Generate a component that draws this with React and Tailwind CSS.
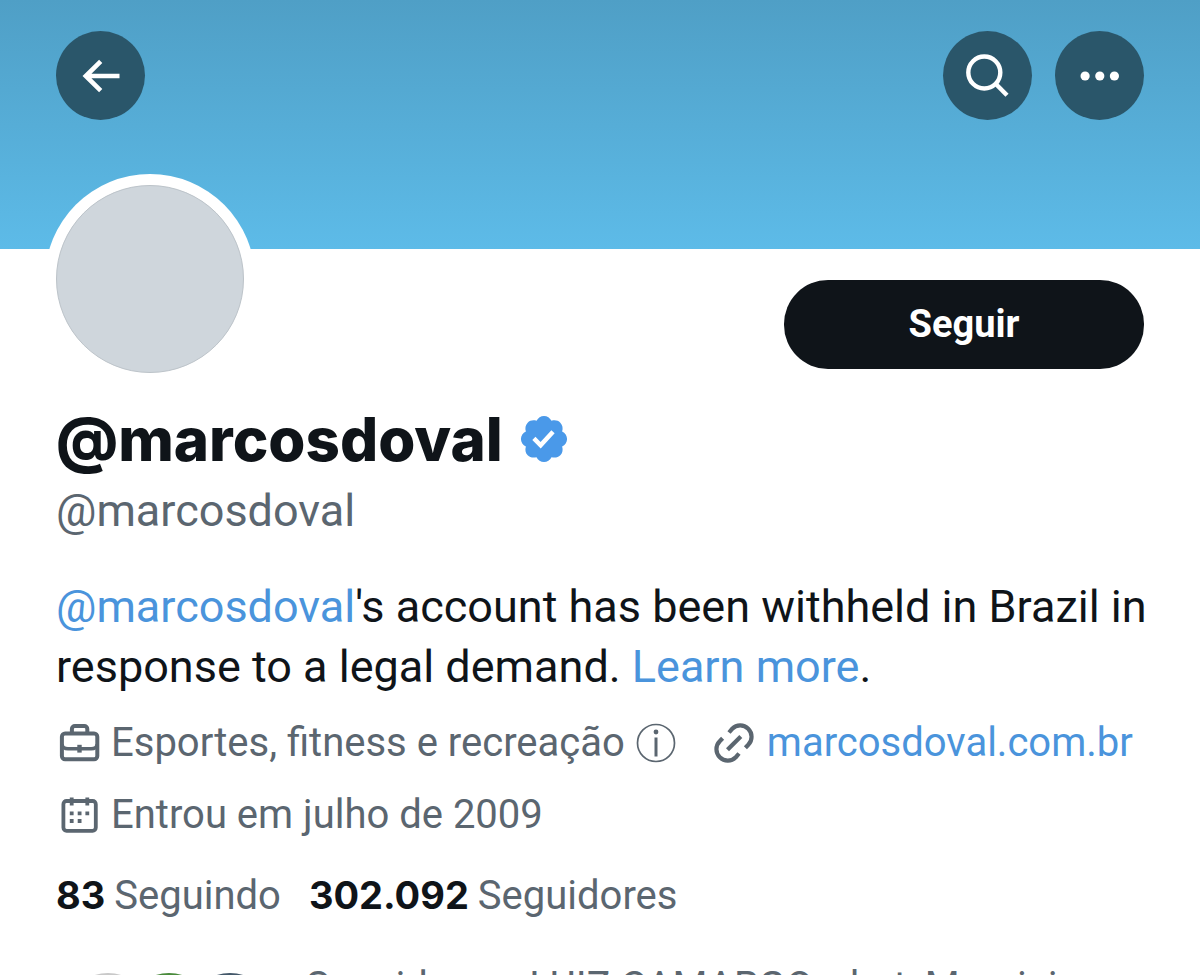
import React from "react";

function RoundButton({ label, children }) {
  return (
    <button
      type="button"
      aria-label={label}
      className="flex size-[89px] items-center justify-center rounded-full bg-[#2a566a] text-white"
    >
      {children}
    </button>
  );
}

function ArrowIcon() {
  return (
    <svg viewBox="0 0 44 44" className="size-11" fill="none" stroke="currentColor" strokeWidth="4.6" aria-hidden="true">
      <path d="M40.5 22H6.500M21.700 7.400 6.800 22l14.900 14.600" />
    </svg>
  );
}

function SearchIcon() {
  return (
    <svg viewBox="0 0 44 44" className="size-11" fill="none" stroke="currentColor" strokeWidth="4.4" aria-hidden="true">
      <circle cx="18.3" cy="18.5" r="16" />
      <path d="M29.6 29.8 41 41.2" />
    </svg>
  );
}

function MoreIcon() {
  return (
    <svg viewBox="0 0 44 44" className="size-11" fill="currentColor" aria-hidden="true">
      <circle cx="7.1" cy="22" r="4.6" />
      <circle cx="21.8" cy="22" r="4.6" />
      <circle cx="36.4" cy="22" r="4.6" />
    </svg>
  );
}

function VerifiedIcon() {
  return (
    <svg viewBox="0 0 24 24" className="size-[54px] text-[#4a99e9]" fill="currentColor" role="img" aria-label="Conta verificada">
      <path d="M22.25 12c0-1.43-.88-2.67-2.19-3.34.46-1.39.2-2.9-.81-3.91s-2.52-1.27-3.91-.81c-.66-1.31-1.91-2.19-3.34-2.19s-2.67.88-3.33 2.19c-1.4-.46-2.91-.2-3.92.81s-1.26 2.52-.8 3.91c-1.31.67-2.2 1.91-2.2 3.34s.89 2.67 2.2 3.34c-.46 1.39-.21 2.9.8 3.91s2.52 1.26 3.91.81c.67 1.31 1.91 2.19 3.34 2.19s2.68-.88 3.34-2.19c1.39.45 2.9.2 3.91-.81s1.27-2.52.81-3.91c1.31-.67 2.19-1.91 2.19-3.34zm-11.71 4.2L6.8 12.46l1.41-1.42 2.26 2.26 4.8-5.23 1.47 1.36-6.2 6.77z" />
    </svg>
  );
}

function BriefcaseIcon() {
  return (
    <svg viewBox="0 0 44 44" className="size-11 shrink-0" fill="none" stroke="currentColor" strokeWidth="4" aria-hidden="true">
      <rect x="5.9" y="12.6" width="35.4" height="25.6" rx="3.2" />
      <path d="M15.9 12.6V8a3 3 0 0 1 3-3h9.400a3 3 0 0 1 3 3v4.600" />
      <path d="M6 23c0 3 2.600 4.700 6 4.700h23.200c3.400 0 6-1.700 6-4.700" strokeWidth="3.500" />
      <path d="M23.500 23.800v7.800" strokeWidth="4.400" />
    </svg>
  );
}

function CalendarIcon() {
  return (
    <svg viewBox="0 0 44 44" className="size-11 shrink-0" fill="none" stroke="currentColor" strokeWidth="3.8" aria-hidden="true">
      <rect x="7.4" y="8" width="32.4" height="29.8" rx="3.2" />
      <path d="M15.700 4.400v8M31.300 4.400v8" />
      <path d="M13.800 20.300h3.800M21.700 20.300h3.800M29.400 20.300h3.800M13.800 28h3.800M21.700 28h3.800" />
    </svg>
  );
}

function InfoIcon() {
  return (
    <svg viewBox="0 0 40 40" className="size-10 shrink-0" fill="none" stroke="currentColor" aria-hidden="true">
      <circle cx="20" cy="20" r="18.5" strokeWidth="1.7" />
      <circle cx="20" cy="9" r="2.4" fill="currentColor" stroke="none" />
      <path d="M20 14.500v19" strokeWidth="3" />
    </svg>
  );
}

function LinkIcon() {
  return (
    <svg viewBox="0 0 44 44" className="size-11 shrink-0" fill="none" stroke="currentColor" strokeWidth="4.2" aria-hidden="true">
      <path d="M17 11.500 20.200 7.800A11.300 11.300 0 0 1 36.300 23.700L33.400 26.800" />
      <path d="M27 32.500 23.800 36.200A11.300 11.300 0 0 1 7.700 20.300L10.600 17.200" />
      <path d="M15.500 28.700 28.800 15.400" />
    </svg>
  );
}

export default function App() {
  return (
    <main className="h-screen overflow-hidden bg-white font-[Roboto,sans-serif] text-[#0f1419]">
      <header className="flex h-[249px] items-start justify-between bg-linear-to-b from-[#4f9fc6] to-[#5dbbe8] px-14 pt-[31px]">
        <RoundButton label="Voltar">
          <ArrowIcon />
        </RoundButton>
        <div className="flex gap-[23px]">
          <RoundButton label="Buscar">
            <SearchIcon />
          </RoundButton>
          <RoundButton label="Mais">
            <MoreIcon />
          </RoundButton>
        </div>
      </header>

      <section className="px-14">
        <div className="flex items-end justify-between">
          <div className="-mt-16 size-[188px] rounded-full border border-[#bcc3c9] bg-[#cfd6dc] ring-[11px] ring-white" />
          <button
            type="button"
            className="mb-1 h-[89px] w-[360px] rounded-[44px] bg-[#0f1419] text-[38px] font-bold text-white"
          >
            Seguir
          </button>
        </div>

        <div className="mt-[30px] flex items-center gap-[14px]">
          <h1 className="font-[Inter,sans-serif] text-[60px] leading-[72px] font-extrabold">@marcosdoval</h1>
          <VerifiedIcon />
        </div>
        <p className="mt-[6px] text-[45px] leading-[60px] text-[#5b6670]">@marcosdoval</p>

        <p className="-mr-4 mt-9 text-[45px] leading-[60px]">
          <a href="#perfil" className="text-[#4a94dc]">@marcosdoval</a>'s account has been withheld in Brazil in
          response to a legal demand. <a href="#saiba-mais" className="text-[#4a94dc]">Learn more</a>.
        </p>

        <ul className="mt-4 flex flex-wrap gap-x-9 gap-y-3 text-[40px] leading-[60px] text-[#5b6670]">
          <li className="flex items-center gap-[11px]">
            <BriefcaseIcon />
            <span>Esportes, fitness e recreação</span>
            <InfoIcon />
          </li>
          <li className="flex items-center gap-[11px]">
            <LinkIcon />
            <a href="#site" className="text-[#4a94dc]">marcosdoval.com.br</a>
          </li>
          <li className="flex items-center gap-[11px]">
            <CalendarIcon />
            <span>Entrou em julho de 2009</span>
          </li>
        </ul>

        <div className="mt-5 flex gap-7 text-[40px] leading-[60px] text-[#5b6670]">
          <a href="#seguindo" className="flex items-baseline gap-[9px]">
            <strong className="font-[Inter,sans-serif] text-[38px] font-bold text-[#0f1419]">83</strong>
            Seguindo
          </a>
          <a href="#seguidores" className="flex items-baseline gap-[9px]">
            <strong className="font-[Inter,sans-serif] text-[38px] font-bold text-[#0f1419]">302.092</strong>
            Seguidores
          </a>
        </div>

        <div className="mt-[31px] flex items-center gap-8 pl-2">
          <div className="flex shrink-0 -space-x-[27px]">
            <div className="size-[88px] rounded-full bg-[#c9c9c9] ring-4 ring-white" />
            <div className="size-[88px] rounded-full bg-[#4a8b3c] ring-4 ring-white" />
            <div className="size-[88px] rounded-full bg-[#44586a] ring-4 ring-white" />
          </div>
          <p className="text-[40px] leading-[60px] text-[#5b6670]">
            Seguido por LUIZ CAMARGO, chat, Mauricio e outras pessoas que você segue
          </p>
        </div>
      </section>
    </main>
  );
}
